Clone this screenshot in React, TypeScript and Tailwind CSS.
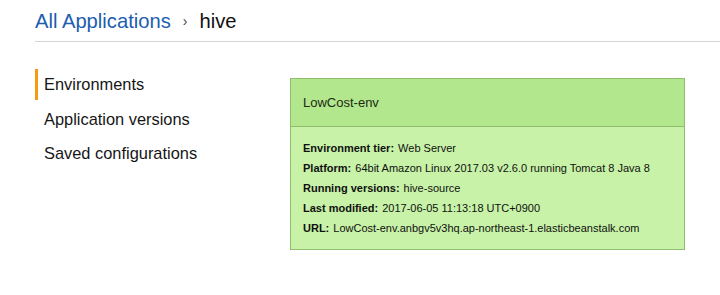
const details = [
  { label: 'Environment tier:', value: 'Web Server' },
  { label: 'Platform:', value: '64bit Amazon Linux 2017.03 v2.6.0 running Tomcat 8 Java 8' },
  { label: 'Running versions:', value: 'hive-source' },
  { label: 'Last modified:', value: '2017-06-05 11:13:18 UTC+0900' },
  { label: 'URL:', value: 'LowCost-env.anbgv5v3hq.ap-northeast-1.elasticbeanstalk.com' },
];

const navItems = ['Environments', 'Application versions', 'Saved configurations'];

export default function App() {
  return (
    <div className="w-[720px] h-[295px] bg-white overflow-hidden font-['Liberation_Sans',Arial,sans-serif] text-[#222]">
      <div className="ml-[35px] pt-[9px] pb-[8px] border-b border-[#d6d6d6] flex items-center">
        <span className="text-[20.2px] leading-[24px] text-[#1c5db0]">All Applications</span>
        <span className="ml-[12px] mr-[12px] text-[14px] leading-[24px] text-[#444]">›</span>
        <span className="text-[20.2px] leading-[24px] text-[#111]">hive</span>
      </div>

      <div className="flex pt-[27px]">
        <nav className="w-[290px] shrink-0 pl-[35px] flex flex-col gap-[3.5px]">
          {navItems.map((item, i) => (
            <div
              key={item}
              className={`h-[31px] flex items-center pl-[6px] text-[16.4px] text-[#161616] border-l-[3px] ${
                i === 0 ? 'border-[#f79a10]' : 'border-transparent'
              }`}
            >
              {item}
            </div>
          ))}
        </nav>

        <div className="w-[395px] mt-[9px] self-start border border-[#8fbe6f] bg-[#c7f2a7]">
          <div className="h-[48px] flex items-center pl-[12px] pt-[1px] bg-[#b2e78d] border-b border-[#8fbe6f] text-[13px] text-[#1c2a12]">
            LowCost-env
          </div>
          <div className="pt-[11px] pb-[11px] px-[12px] text-[11px] text-[#111]">
            {details.map((d) => (
              <div key={d.label} className="h-[20px] flex items-center whitespace-nowrap">
                <span className="font-bold mr-[4px]">{d.label}</span>
                <span>{d.value}</span>
              </div>
            ))}
          </div>
        </div>
      </div>
    </div>
  );
}
